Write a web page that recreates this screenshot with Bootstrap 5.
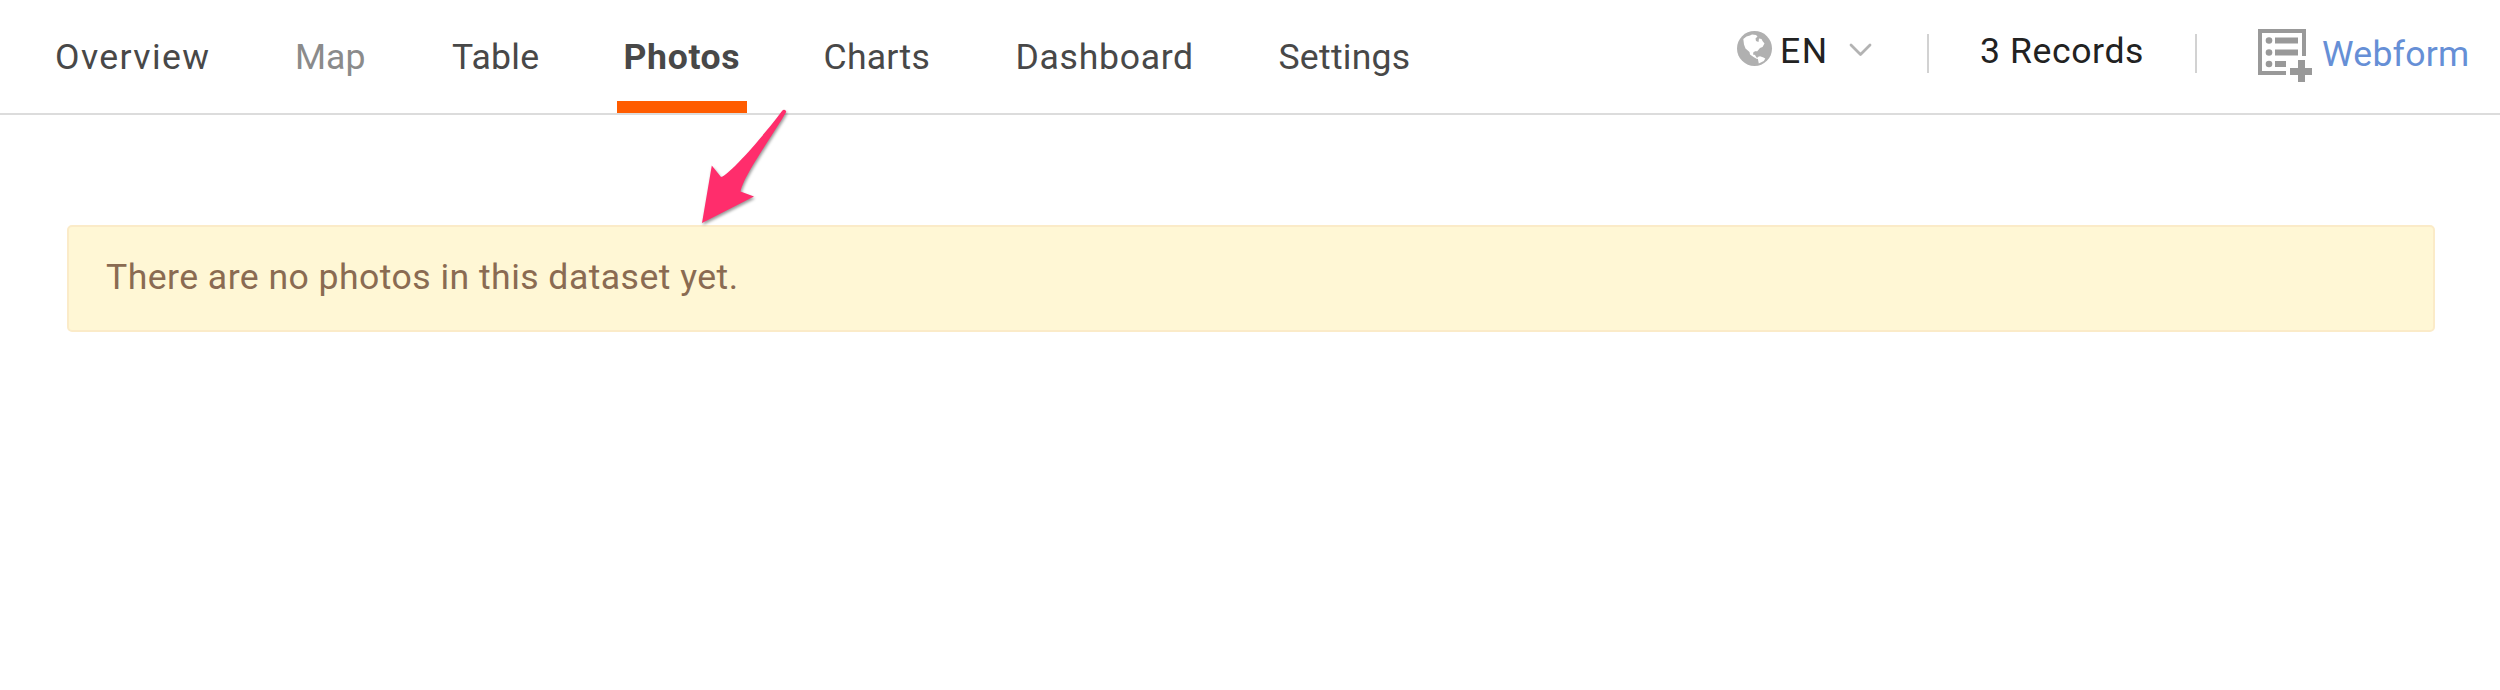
<!DOCTYPE html>
<html lang="en">
<head>
<meta charset="utf-8">
<title>Photos</title>
<link href="https://cdn.jsdelivr.net/npm/bootstrap@5.3.0/dist/css/bootstrap.min.css" rel="stylesheet">
<style>
body{font-family:Roboto,"Liberation Sans",sans-serif;font-size:35.6px;line-height:42px;color:#222;background:#fff;min-height:690px;overflow:hidden}
.topbar{height:115px;border-bottom:2px solid #dcdcdc}
.tabs{display:grid;grid-template-columns:170px 87px 101.5px 130px 122px 193px 150px;column-gap:70px;margin-left:48px}
.tabs .nav-link{padding:36px 0 0 7px;height:113px;color:#484848;font-size:inherit;white-space:nowrap}
.tabs .nav-link.muted-tab{color:#8b8b8b}
.tabs .nav-link.active{font-weight:700;letter-spacing:.65px;border-bottom:12px solid #ff5c00}
.ls-overview{letter-spacing:1.4px}
.ls-tight{letter-spacing:.25px}
.ls-wide{letter-spacing:.7px}
.tools{margin-right:31px;white-space:nowrap}
.globe{margin-top:31px}
.lang{width:67px;margin:30px 0 0 7px;letter-spacing:1.6px}
.chev{margin:41px 53px 0 1px}
.rule-v{width:2px;height:39px;background:#d2d2d2;margin-top:34px}
.records{width:163px;margin:30px 52px 0 51px;letter-spacing:.6px}
.form-icon{margin:28px 0 0 60px}
.webform{color:#668fd6;width:147px;margin:33px 0 0 9px;letter-spacing:.25px}
.notice{margin:110px 65px 0 67px;height:107px;padding:29px 37px 0;background:#fff7d5;border:2px solid #fbebc8;border-radius:5px;color:#8a6b52;letter-spacing:.46px}
.pointer{left:690px;top:100px;filter:drop-shadow(1px 2px 1.5px rgba(0,0,0,.4))}
</style>
</head>
<body class="position-relative">
<header class="topbar d-flex justify-content-between align-items-start">
  <nav class="tabs">
    <a class="nav-link ls-overview">Overview</a>
    <a class="nav-link muted-tab">Map</a>
    <a class="nav-link ls-tight">Table</a>
    <a class="nav-link active">Photos</a>
    <a class="nav-link ls-tight">Charts</a>
    <a class="nav-link ls-wide">Dashboard</a>
    <a class="nav-link ls-tight">Settings</a>
  </nav>
  <div class="tools d-flex align-items-start">
    <svg class="globe" width="36" height="36" viewBox="0 0 36 36"><circle cx="17.5" cy="17.5" r="17.500" fill="#b0b0b0"/><path fill="#fff" d="M6.300 8 9.500 5.500 13 4.500l2-1 4 .5 1.500 1.500-2 2 .5 2.500 2.500 1 .5-3.500 2.500.5 1 2 2 2.500-2 3.500-2.500 1-3 3.500-1-.5-2.500 1-.5 2.500 2 .5 1.500 2.500 2 1-1.500.5-3.500-2-3.500-2.500-.5-2.500-4-3.500-1.500-4zM20.500 26l2.500-.8 3.500 1.300 1.800.9-1.500 2.500-5 2.600-.6-3z"/></svg>
    <span class="lang">EN</span>
    <svg class="chev" width="26" height="18" viewBox="0 0 26 18" fill="none" stroke="#b3b3b3" stroke-width="2.8" stroke-linecap="round" stroke-linejoin="round"><path d="m3 4 9.500 9.500L22 4"/></svg>
    <div class="rule-v"></div>
    <span class="records">3 Records</span>
    <div class="rule-v"></div>
    <svg class="form-icon" width="56" height="56" viewBox="0 0 56 56" fill="#999"><path d="M1 1h48v27h-4V5H5v38h24v4H1z"/><circle cx="12" cy="12.500" r="3.300"/><circle cx="12" cy="24.500" r="3.300"/><circle cx="12" cy="36" r="3.300"/><path d="M18 9.500h23v6H18zM18 21.500h23v6H18zM18 33h11v6H18zM41 32h7v8h7v7h-7v7h-7v-7h-8v-7h8z"/></svg>
    <a class="webform text-decoration-none">Webform</a>
  </div>
</header>
<main><div class="notice">There are no photos in this dataset yet.</div></main>
<svg class="pointer position-absolute" width="110" height="132" viewBox="0 0 110 132"><path fill="#ff2d6c" d="M12 123 21.800 65.500 31 77C41 74 78 30 92 11Q94 8.500 96 11 96.500 12 95 14C83 35 54 75 50.500 91.500L64 96.500z"/></svg>
<script src="https://cdn.jsdelivr.net/npm/bootstrap@5.3.0/dist/js/bootstrap.bundle.min.js"></script>
</body>
</html>
